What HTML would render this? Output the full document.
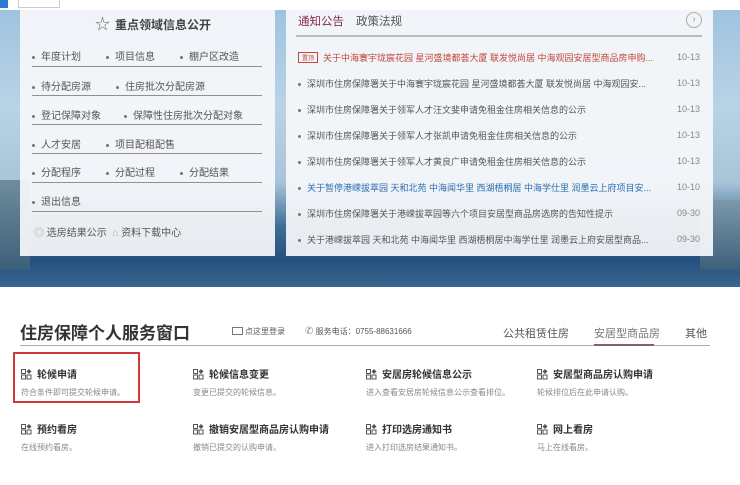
<!DOCTYPE html>
<html><head><meta charset="utf-8"><style>
*{margin:0;padding:0;box-sizing:border-box}
body{width:740px;height:485px;overflow:hidden;background:#fff;font-family:"Liberation Sans","Noto Sans CJK SC",sans-serif;position:relative;color:#555}
.abs{position:absolute;white-space:nowrap}
#bg{position:absolute;left:0;top:10px;width:740px;height:277px;background:linear-gradient(180deg,#9fc3e0 0%,#b9d3e6 35%,#a9c4d8 62%,#3f6f99 78%,#25507e 90%,#3a6690 100%)}
.panel{position:absolute;background:rgba(246,247,250,0.93)}
.li{position:absolute;font-size:10px;color:#555;white-space:nowrap}
.li:before{content:"";display:inline-block;width:3px;height:3px;border-radius:50%;background:#777;margin-right:6px;vertical-align:middle}
.sep{position:absolute;left:12px;width:230px;height:1px;background:#9a8a92}
.nw{position:absolute;left:12px;font-size:9px;color:#555;width:362px;overflow:hidden;white-space:nowrap}
.nw:before{content:"";display:inline-block;width:3px;height:3px;border-radius:50%;background:#777;margin-right:6px;vertical-align:middle}
.dt{position:absolute;left:391px;font-size:9px;color:#888}
.card .t{font-size:10px;color:#333;font-weight:bold;white-space:nowrap}
.card .d{font-size:8px;color:#888;margin-top:6px;white-space:nowrap}
.card{position:absolute}
.ic{display:inline-block;width:11px;height:11px;vertical-align:-2px;margin-right:5px}
</style></head><body>
<div class="abs" style="left:0;top:0;width:8px;height:8px;background:#2a7bd4"></div>
<div class="abs" style="left:18px;top:0;width:42px;height:8px;border:1px solid #ccc;border-top:none;background:#fff"></div>
<div id="bg"></div>
<div class="abs" style="left:0;top:180px;width:30px;height:90px;background:linear-gradient(#6e8c9d,#3d607a)"></div>
<div class="abs" style="left:700px;top:200px;width:40px;height:70px;background:linear-gradient(#7c99ab,#3d607a)"></div>

<div class="panel" style="left:20px;top:10px;width:255px;height:246px">
 <div class="abs" style="left:75px;top:3px;font-size:12px;font-weight:bold;color:#444"><span style="font-size:15px;font-weight:normal;color:#666;margin-right:5px">☆</span>重点领域信息公开</div>
 <div class="li" style="left:12px;top:38px">年度计划</div><div class="li" style="left:86px;top:38px">项目信息</div><div class="li" style="left:160px;top:38px">棚户区改造</div>
 <div class="sep" style="top:56px"></div>
 <div class="li" style="left:12px;top:68px">待分配房源</div><div class="li" style="left:96px;top:68px">住房批次分配房源</div>
 <div class="sep" style="top:85px"></div>
 <div class="li" style="left:12px;top:97px">登记保障对象</div><div class="li" style="left:104px;top:97px">保障性住房批次分配对象</div>
 <div class="sep" style="top:114px"></div>
 <div class="li" style="left:12px;top:126px">人才安居</div><div class="li" style="left:86px;top:126px">项目配租配售</div>
 <div class="sep" style="top:143px"></div>
 <div class="li" style="left:12px;top:154px">分配程序</div><div class="li" style="left:86px;top:154px">分配过程</div><div class="li" style="left:160px;top:154px">分配结果</div>
 <div class="sep" style="top:172px"></div>
 <div class="li" style="left:12px;top:183px">退出信息</div>
 <div class="sep" style="top:201px"></div>
 <div class="abs" style="left:14px;top:214px;font-size:10px;color:#555"><span style="color:#aaa">◎</span> 选房结果公示 &nbsp;<span style="color:#aaa">⌂</span> 资料下载中心</div>
</div>

<div class="panel" style="left:286px;top:10px;width:427px;height:246px">
 <div class="abs" style="left:12px;top:3px;font-size:11.5px;color:#8a2a4a">通知公告</div>
 <div class="abs" style="left:70px;top:3px;font-size:11.5px;color:#555">政策法规</div>
 <div class="abs" style="left:400px;top:2px;width:16px;height:16px;border:1px solid #aaa;border-radius:50%;font-size:10px;color:#999;text-align:center;line-height:14px">›</div>
 <div class="abs" style="left:10px;top:25px;width:406px;height:2px;background:#c0b8bc"></div>
 <div class="abs" style="left:12px;top:41px;font-size:9px;color:#c4463a;width:372px;overflow:hidden"><span style="display:inline-block;border:1px solid #c4463a;font-size:6px;padding:0 3px;margin-right:5px;vertical-align:1px">置顶</span>关于中海寰宇珑宸花园 星河盛境都荟大厦 联发悦尚居 中海观园安居型商品房申购...</div>
 <div class="nw" style="top:67px">深圳市住房保障署关于中海寰宇珑宸花园 星河盛境都荟大厦 联发悦尚居 中海观园安...</div>
 <div class="nw" style="top:93px">深圳市住房保障署关于领军人才汪文斐申请免租金住房相关信息的公示</div>
 <div class="nw" style="top:119px">深圳市住房保障署关于领军人才张凯申请免租金住房相关信息的公示</div>
 <div class="nw" style="top:145px">深圳市住房保障署关于领军人才黄良广申请免租金住房相关信息的公示</div>
 <div class="nw" style="top:171px;color:#2a6fb0">关于暂停港嵘拔萃园 天和北苑 中海闻华里 西湖梧桐居 中海学仕里 润墨云上府项目安...</div>
 <div class="nw" style="top:197px">深圳市住房保障署关于港嵘拔萃园等六个项目安居型商品房选房的告知性提示</div>
 <div class="nw" style="top:223px">关于港嵘拔萃园 天和北苑 中海闻华里 西湖梧桐居中海学仕里 润墨云上府安居型商品...</div>
 <div class="dt" style="top:42px">10-13</div><div class="dt" style="top:68px">10-13</div><div class="dt" style="top:94px">10-13</div><div class="dt" style="top:120px">10-13</div><div class="dt" style="top:146px">10-13</div><div class="dt" style="top:172px">10-10</div><div class="dt" style="top:198px">09-30</div><div class="dt" style="top:224px">09-30</div>
</div>

<div class="abs" style="left:20px;top:319px;font-size:17px;font-weight:bold;color:#333">住房保障个人服务窗口</div>
<div class="abs" style="left:232px;top:326px;font-size:8px;color:#555"><span style="display:inline-block;width:11px;height:8px;border:1px solid #777;vertical-align:-1px;margin-right:2px"></span>点这里登录</div>
<div class="abs" style="left:305px;top:326px;font-size:8px;color:#555"><span style="color:#888;font-size:10px">✆</span> 服务电话：0755-88631666</div>
<div class="abs" style="left:503px;top:325px;font-size:11px;color:#555">公共租赁住房</div>
<div class="abs" style="left:594px;top:325px;font-size:11px;color:#777">安居型商品房</div>
<div class="abs" style="left:685px;top:325px;font-size:11px;color:#555">其他</div>
<div class="abs" style="left:20px;top:345px;width:690px;height:1px;background:#b8aab0"></div>
<div class="abs" style="left:594px;top:344px;width:60px;height:2px;background:#8a5a70"></div>
<div class="abs" style="left:13px;top:352px;width:127px;height:51px;border:2px solid #d0383c"></div>

<svg width="0" height="0" style="position:absolute"><defs><g id="i"><rect x="0.5" y="0.5" width="4" height="4" fill="none" stroke="#555"/><rect x="0.5" y="6" width="4" height="4" fill="none" stroke="#555"/><rect x="6" y="6" width="4" height="4" fill="none" stroke="#555"/><path d="M8 0L10.5 2.5L8 5L5.5 2.5Z" fill="#555"/></g></defs></svg>
<div class="card" style="left:21px;top:366px"><div class="t"><svg class="ic" viewBox="0 0 11 11"><use href="#i"/></svg>轮候申请</div><div class="d">符合条件即可提交轮候申请。</div></div>
<div class="card" style="left:193px;top:366px"><div class="t"><svg class="ic" viewBox="0 0 11 11"><use href="#i"/></svg>轮候信息变更</div><div class="d">变更已提交的轮候信息。</div></div>
<div class="card" style="left:366px;top:366px"><div class="t"><svg class="ic" viewBox="0 0 11 11"><use href="#i"/></svg>安居房轮候信息公示</div><div class="d">进入查看安居房轮候信息公示查看排位。</div></div>
<div class="card" style="left:537px;top:366px"><div class="t"><svg class="ic" viewBox="0 0 11 11"><use href="#i"/></svg>安居型商品房认购申请</div><div class="d">轮候排位后在此申请认购。</div></div>
<div class="card" style="left:21px;top:421px"><div class="t"><svg class="ic" viewBox="0 0 11 11"><use href="#i"/></svg>预约看房</div><div class="d">在线预约看房。</div></div>
<div class="card" style="left:193px;top:421px"><div class="t"><svg class="ic" viewBox="0 0 11 11"><use href="#i"/></svg>撤销安居型商品房认购申请</div><div class="d">撤销已提交的认购申请。</div></div>
<div class="card" style="left:366px;top:421px"><div class="t"><svg class="ic" viewBox="0 0 11 11"><use href="#i"/></svg>打印选房通知书</div><div class="d">进入打印选房结果通知书。</div></div>
<div class="card" style="left:537px;top:421px"><div class="t"><svg class="ic" viewBox="0 0 11 11"><use href="#i"/></svg>网上看房</div><div class="d">马上在线看房。</div></div>
</body></html>
